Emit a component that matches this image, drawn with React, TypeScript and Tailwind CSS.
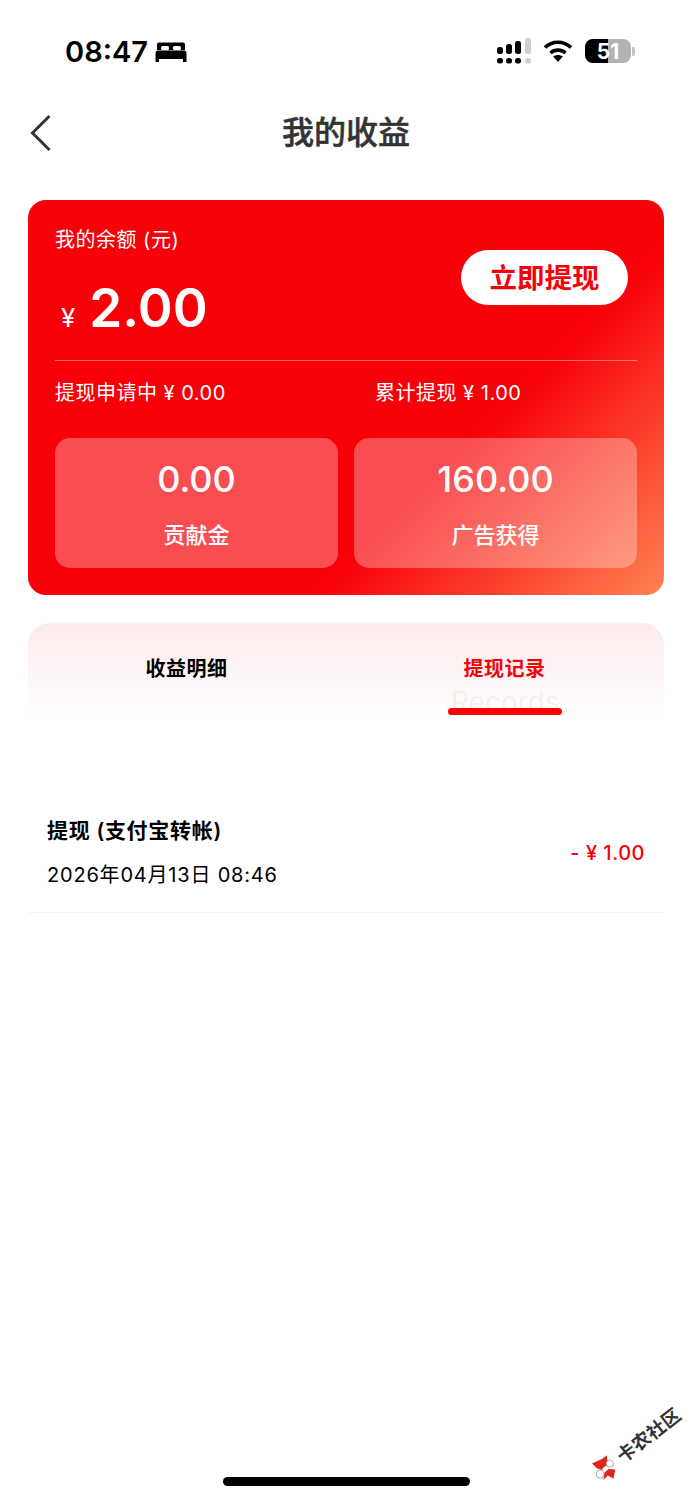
import React from "react";

function Bed() {
  return (
    <svg width="32" height="22" viewBox="0 0 32 22" className="ml-[7px]">
      <path d="M4 1.5h24a2 2 0 0 1 2 2V9H2V3.500a2 2 0 0 1 2-2z" fill="#000" />
      <rect x="6" y="5" width="8" height="4" rx="1.500" fill="#fff" />
      <rect x="18" y="5" width="8" height="4" rx="1.500" fill="#fff" />
      <path d="M3 9.500h26a2.500 2.500 0 0 1 2.500 2.500v9H28v-3H4v3H.5v-9A2.500 2.500 0 0 1 3 9.500z" fill="#000" />
    </svg>
  );
}

function Signal() {
  return (
    <svg width="36" height="26" viewBox="0 0 36 26">
      <rect x="1" y="9" width="6" height="7" rx="2.500" fill="#000" />
      <rect x="10" y="6" width="6" height="10" rx="2.500" fill="#000" />
      <rect x="19" y="3" width="6" height="13" rx="2.500" fill="#000" />
      <rect x="29" y="0" width="6" height="16" rx="2.500" fill="#cfcfcf" />
      <rect x="1" y="20" width="6" height="5.500" rx="2.500" fill="#000" />
      <rect x="10" y="20" width="6" height="5.500" rx="2.500" fill="#000" />
      <rect x="19" y="20" width="6" height="5.500" rx="2.500" fill="#000" />
      <rect x="29" y="20" width="6" height="5.500" rx="2.500" fill="#cfcfcf" />
    </svg>
  );
}

function Wifi() {
  return (
    <svg width="30" height="22" viewBox="0 0 30 22">
      <path d="M2 7.500C9.500 .5 20.500 .5 28 7.500" fill="none" stroke="#000" strokeWidth="3.600" />
      <path d="M7.500 13C11.800 9.200 18.200 9.200 22.500 13" fill="none" stroke="#000" strokeWidth="3.600" />
      <path d="M15 22l-4.800-5.500c2.800-2 6.800-2 9.600 0z" fill="#000" />
    </svg>
  );
}

function Battery() {
  return (
    <div className="relative ml-[12px] flex h-[24px] w-[51px] items-center">
      <div className="relative flex h-[24px] w-[46px] overflow-hidden rounded-[8px] bg-[#b2b2b2]">
        <div className="h-full w-[23px] bg-black" />
        <div className="absolute inset-0 flex items-center justify-center text-[21px] font-bold leading-none text-white">51</div>
      </div>
      <div className="ml-[1px] h-[9px] w-[3px] rounded-r-[2px] bg-[#c4c4c4]" />
    </div>
  );
}

function StatBox({ value, label }: { value: string; label: string }) {
  return (
    <div className="flex h-[130px] flex-1 flex-col items-center rounded-[15px] bg-white/30 pt-[19px] text-white">
      <div className="text-[36px] font-medium leading-[44px]">{value}</div>
      <div className="mt-[20px] text-[22px] font-medium leading-[28px]">{label}</div>
    </div>
  );
}

export default function App() {
  return (
    <div className="relative h-[1500px] w-[692px] overflow-hidden bg-white font-['Inter','Noto_Sans_CJK_SC',sans-serif]">
      <div className="flex h-[100px] items-start justify-between pl-[65px] pr-[56px] pt-[37px]">
        <div className="flex items-center">
          <span className="text-[29px] font-semibold leading-[30px] text-black">08:47</span>
          <Bed />
        </div>
        <div className="flex items-center pt-[1px]">
          <Signal />
          <div className="ml-[11px]"><Wifi /></div>
          <Battery />
        </div>
      </div>

      <div className="relative flex h-[66px] items-center justify-center">
        <svg width="22" height="38" viewBox="0 0 22 38" className="absolute left-[30px] top-[14px]">
          <path d="M19.500 2L2.500 19l17 17" fill="none" stroke="#333" strokeWidth="3" />
        </svg>
        <div className="text-[32px] font-medium leading-[40px] text-[#333] [-webkit-text-stroke:0.5px_#333]">我的收益</div>
      </div>

      <div className="mx-[28px] mt-[34px] h-[395px] rounded-[18px] bg-[linear-gradient(135deg,#f80008_66%,#ff8252_100%)] px-[27px] pt-[26px] text-white">
        <div className="flex justify-between">
          <div>
            <div className="text-[20px] leading-[28px] tracking-[0.5px]">我的余额 (元)</div>
            <div className="mt-[24px] flex items-baseline pl-[6px]">
              <span className="text-[26px] leading-none">¥</span>
              <span className="ml-[14px] text-[53px] font-semibold leading-[60px]">2.00</span>
            </div>
          </div>
          <div className="mr-[9px] mt-[24px] flex h-[55px] w-[167px] items-center justify-center rounded-full bg-white pt-[2px] text-[27.500px] font-bold text-[#f80008]">
            立即提现
          </div>
        </div>
        <div className="mt-[22px] h-[1px] bg-white/40" />
        <div className="mt-[18px] flex text-[20px] leading-[28px] tracking-[0.5px]">
          <div className="w-[320px]">提现申请中 ¥ 0.00</div>
          <div>累计提现 ¥ 1.00</div>
        </div>
        <div className="mt-[31px] flex gap-[16px]">
          <StatBox value="0.00" label="贡献金" />
          <StatBox value="160.00" label="广告获得" />
        </div>
      </div>

      <div className="relative mx-[28px] mt-[28px] h-[92px] rounded-t-[22px] bg-[linear-gradient(180deg,#fdeaec_0%,#ffffff_100%)]">
        <div className="flex pt-[32px] text-[20px] font-semibold leading-[28px] tracking-[0.5px]">
          <div className="w-[317px] text-center text-black">收益明细</div>
          <div className="w-[319px] text-center text-[#f80008]">提现记录</div>
        </div>
        <div className="absolute left-[423px] top-[62px] text-[28px] leading-[34px] text-[#f80008]/[0.07]">Records</div>
        <div className="absolute left-[420px] top-[85px] h-[7px] w-[114px] rounded-full bg-[#f80008]" />
      </div>

      <div className="mx-[28px] mt-[83px] flex h-[115px] items-center justify-between border-b border-[#f5f5f5] pl-[19px] pr-[19px] pb-[4px]">
        <div>
          <div className="text-[21px] font-semibold leading-[28px] tracking-[0.7px] text-black">提现 (支付宝转帐)</div>
          <div className="mt-[16px] text-[20px] leading-[28px] tracking-[0.8px] text-black">2026年04月13日 08:46</div>
        </div>
        <div className="text-[20px] font-medium leading-[28px] tracking-[0.5px] text-[#f80008]">- ¥ 1.00</div>
      </div>

      <div className="absolute left-[223px] top-[1477px] h-[9px] w-[247px] rounded-full bg-black" />

      <svg width="27" height="28" viewBox="60 190 80 85" className="absolute left-[590px] top-[1453px]">
        <path d="M65 222L95 208L110 197L113 225L98 242L80 236z" fill="#e0261c" />
        <path d="M104 238L136 240L130 268L113 258L100 272z" fill="#e0261c" />
        <circle cx="119" cy="222" r="11" fill="#fff" stroke="#555" strokeWidth="1.500" />
        <circle cx="90" cy="254" r="12" fill="#fff" stroke="#555" strokeWidth="1.500" />
        <path d="M96 238L108 228L114 240L102 250z" fill="#fff" />
      </svg>
      <div className="absolute left-[611px] top-[1423px] -rotate-[38deg] whitespace-nowrap text-[18.500px] font-bold leading-[24px] tracking-[0.3px] text-[#333]">卡农社区</div>
    </div>
  );
}
